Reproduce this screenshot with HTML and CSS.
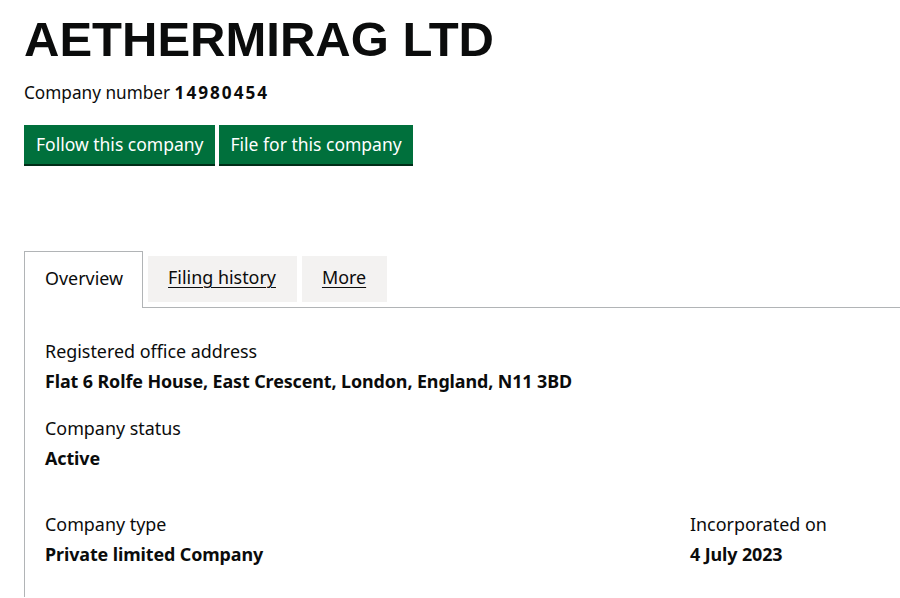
FILE: index.html
```html
<!DOCTYPE html>
<html lang="en">
<head>
<meta charset="utf-8">
<title>AETHERMIRAG LTD</title>
<link rel="stylesheet" href="styles.css">
</head>
<body>
<main class="page">
  <h1 class="title">AETHERMIRAG LTD</h1>
  <p class="company-number">Company number <strong class="number">14980454</strong></p>
  <div class="actions">
    <a class="button" href="#">Follow this company</a>
    <a class="button" href="#">File for this company</a>
  </div>
  <div class="tabs">
    <ul class="tab-list">
      <li class="tab tab--selected"><span class="tab-label">Overview</span></li>
      <li class="tab"><a class="tab-link" href="#">Filing history</a></li>
      <li class="tab"><a class="tab-link" href="#">More</a></li>
    </ul>
    <section class="panel">
      <dl class="details">
        <div class="detail">
          <dt class="label">Registered office address</dt>
          <dd class="value">Flat 6 Rolfe House, East Crescent, London, England, N11 3BD</dd>
        </div>
        <div class="detail">
          <dt class="label">Company status</dt>
          <dd class="value">Active</dd>
        </div>
      </dl>
      <div class="detail-grid">
        <dl class="detail">
          <dt class="label">Company type</dt>
          <dd class="value">Private limited Company</dd>
        </dl>
        <dl class="detail">
          <dt class="label">Incorporated on</dt>
          <dd class="value">4 July 2023</dd>
        </dl>
      </div>
    </section>
  </div>
</main>
</body>
</html>
```

FILE: styles.css
```css
* {
  box-sizing: border-box;
}

body {
  margin: 0;
  background: #ffffff;
  color: #0b0c0c;
  font-family: "Noto Sans", "Open Sans", sans-serif;
  font-size: 17.9px;
  line-height: 25px;
}

.page {
  padding: 11px 0 0 24px;
}

.title {
  margin: 0;
  font-family: "Liberation Sans", Arial, sans-serif;
  font-size: 49px;
  font-weight: 700;
  line-height: 56px;
  color: #0b0c0c;
}

.company-number {
  margin: 13px 0 0;
  font-size: 17.2px;
}

.number {
  font-weight: 700;
  letter-spacing: 2px;
}

.actions {
  display: flex;
  gap: 4px;
  margin-top: 20px;
}

.button {
  display: block;
  padding: 7px 11px 7px 12px;
  background: #00703c;
  color: #ffffff;
  font-size: 17.5px;
  text-decoration: none;
  box-shadow: 0 2px 0 #002d18;
}

.tabs {
  margin-top: 92px;
}

.tab-list {
  display: flex;
  align-items: flex-start;
  margin: 0;
  padding: 0;
  list-style: none;
  border-bottom: 1px solid #b1b4b6;
}

.tab {
  margin: 0 5px 5px 0;
  padding: 9px 21px 12px 20px;
  background: #f3f2f1;
}

.tab--selected {
  margin: -5px 5px -1px 0;
  padding: 14px 19px 17px 20px;
  border: 1px solid #b1b4b6;
  border-bottom: 0;
  background: #ffffff;
}

.tab-link {
  color: #0b0c0c;
  text-decoration: underline;
  text-decoration-thickness: 1px;
  text-underline-offset: 3px;
}

.panel {
  border-left: 1px solid #b1b4b6;
  padding: 31px 20px 30px;
}

.details,
.detail {
  margin: 0;
}

.details .detail + .detail {
  margin-top: 22px;
}

.label {
  margin: 0;
}

.value {
  margin: 5px 0 0;
  font-weight: 700;
  letter-spacing: -0.1px;
}

.detail-grid {
  display: grid;
  grid-template-columns: 645px auto;
  margin-top: 41px;
}
```
